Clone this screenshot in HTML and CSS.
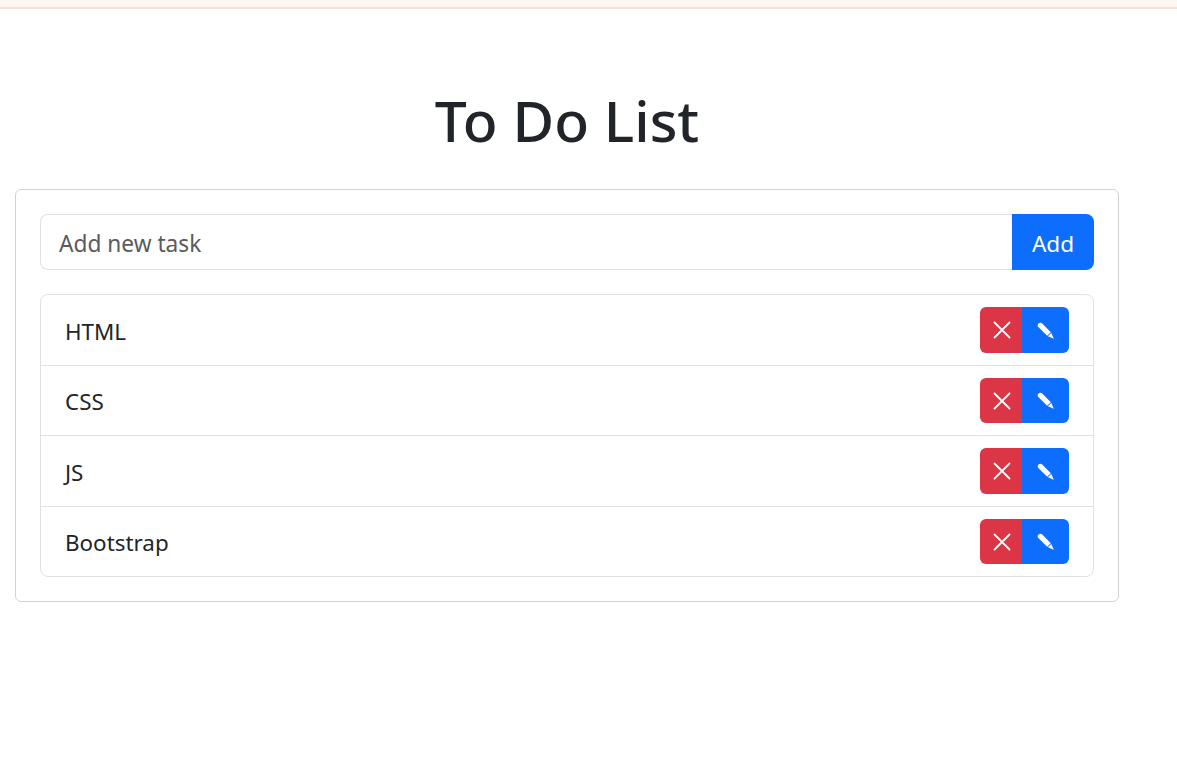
FILE: index.html
```html
<!DOCTYPE html>
<html lang="en">
  <head>
    <meta charset="UTF-8" />
    <title>To Do List</title>
    <link rel="stylesheet" href="styles.css">
  </head>
  <body>
    <svg class="icon-defs" width="0" height="0">
      <symbol id="icon-x" viewBox="0 0 18 18">
        <path d="M1.5 1.5l15 15M16.5 1.5l-15 15" fill="none" stroke="currentColor" stroke-width="1.8" stroke-linecap="round"/>
      </symbol>
      <symbol id="icon-pencil" viewBox="0 0 18 18">
        <path d="M5.24 1.56L13.84 10.16L10.16 13.84L1.56 5.24A2.6 2.6 0 0 1 5.24 1.56z" fill="currentColor"/>
        <path d="M14.3 10.9L10.9 14.3L16.8 16.8z" fill="currentColor"/>
      </symbol>
    </svg>
    <div class="top-line"></div>
    <div class="container">
      <h1>To Do List</h1>
      <div class="card">
        <div class="input-row">
          <input type="text" placeholder="Add new task" />
          <button class="btn-add">Add</button>
        </div>
        <ul class="task-list">
          <li>
            <span>HTML</span>
            <div class="btn-group">
              <button class="btn-delete"><svg class="icon-x"><use href="#icon-x"></use></svg></button>
              <button class="btn-edit"><svg class="icon-pencil"><use href="#icon-pencil"></use></svg></button>
            </div>
          </li>
          <li>
            <span>CSS</span>
            <div class="btn-group">
              <button class="btn-delete"><svg class="icon-x"><use href="#icon-x"></use></svg></button>
              <button class="btn-edit"><svg class="icon-pencil"><use href="#icon-pencil"></use></svg></button>
            </div>
          </li>
          <li>
            <span>JS</span>
            <div class="btn-group">
              <button class="btn-delete"><svg class="icon-x"><use href="#icon-x"></use></svg></button>
              <button class="btn-edit"><svg class="icon-pencil"><use href="#icon-pencil"></use></svg></button>
            </div>
          </li>
          <li>
            <span>Bootstrap</span>
            <div class="btn-group">
              <button class="btn-delete"><svg class="icon-x"><use href="#icon-x"></use></svg></button>
              <button class="btn-edit"><svg class="icon-pencil"><use href="#icon-pencil"></use></svg></button>
            </div>
          </li>
        </ul>
      </div>
    </div>
  </body>
</html>
```

FILE: styles.css
```css
* {
  box-sizing: border-box;
}

body {
  font-family: "Noto Sans", "Open Sans", sans-serif;
  margin: 0;
  background-color: #fff;
  color: #212529;
}

.icon-defs {
  display: block;
  height: 0;
}

.top-line {
  height: 9px;
  background-color: #fef6f1;
  border-bottom: 2px solid #f9dfd3;
}

.container {
  width: 1104px;
  margin-left: 15px;
}

h1 {
  margin: 0;
  padding-top: 73px;
  height: 180px;
  font-size: 57px;
  font-weight: 550;
  line-height: 76px;
  text-align: center;
}

.card {
  border: 1px solid #d2d2d2;
  border-radius: 6px;
  padding: 24px;
}

.input-row {
  display: flex;
  height: 56px;
  margin-bottom: 24px;
}

.input-row input {
  flex: 1;
  min-width: 0;
  padding: 10px 18px 8px;
  font-family: inherit;
  font-size: 22.7px;
  border: 1px solid #dee2e6;
  border-right: none;
  border-radius: 8px 0 0 8px;
  outline: none;
}

.input-row input::placeholder {
  color: #595c5f;
}

.btn-add {
  width: 82px;
  padding: 2px 0 0;
  border: none;
  border-radius: 0 8px 8px 0;
  background-color: #0d6efd;
  color: white;
  font-family: inherit;
  font-size: 22.6px;
}

.task-list {
  list-style: none;
  margin: 0;
  padding: 0;
  border: 1px solid #dee2e6;
  border-radius: 8px;
}

.task-list li {
  display: flex;
  justify-content: space-between;
  align-items: center;
  height: 70.5px;
  padding: 0 24px;
  font-size: 22.4px;
  border-bottom: 1px solid #dee2e6;
}

.task-list li span {
  padding-top: 3px;
}

.task-list li:last-child {
  height: 69.5px;
  border-bottom: none;
}

.btn-group {
  display: flex;
  height: 45.5px;
}

.btn-group button {
  display: flex;
  align-items: center;
  justify-content: center;
  padding: 0;
  border: none;
  color: white;
}

.btn-delete {
  width: 42px;
  background-color: #dc3545;
  border-radius: 6px 0 0 6px;
}

.btn-edit {
  width: 47px;
  background-color: #0d6efd;
  border-radius: 0 6px 6px 0;
}

.icon-x {
  width: 18px;
  height: 18px;
  margin: 1px 0 0 1px;
}

.icon-pencil {
  width: 18px;
  height: 18px;
  margin-top: 2px;
}
```
